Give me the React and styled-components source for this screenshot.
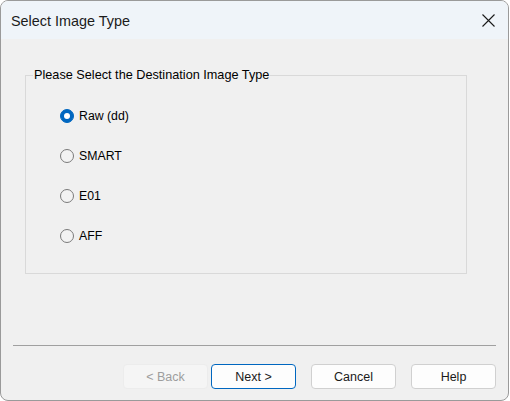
import React, { useState } from "react";
import styled, { createGlobalStyle } from "styled-components";

const Global = createGlobalStyle`
  html, body { margin: 0; padding: 0; background: #ffffff; }
  body { font-family: "Liberation Sans", Arial, sans-serif; }
  * { box-sizing: border-box; }
`;

const Window = styled.div`
  width: 509px;
  height: 401px;
  border: 1px solid #9a9a9a;
  border-radius: 8px;
  overflow: hidden;
  background: #f0f0f0;
  display: flex;
  flex-direction: column;
`;

const TitleBar = styled.div`
  height: 38px;
  flex: none;
  background: #eff4f9;
  display: flex;
  align-items: center;
  justify-content: space-between;
  padding: 0 13px 0 10px;
`;

const Title = styled.div`
  font-size: 14.4px;
  color: #1b1b1b;
  padding-top: 1px;
`;

const CloseButton = styled.button`
  border: 0;
  background: transparent;
  padding: 0;
  width: 14px;
  height: 14px;
  display: flex;
  align-items: center;
  justify-content: center;
`;

const Body = styled.div`
  flex: 1;
  display: flex;
  flex-direction: column;
  padding: 29px 0 0 0;
`;

const Group = styled.fieldset`
  margin: 0 0 0 24px;
  width: 442px;
  height: 206px;
  border: 1px solid #d9d9d9;
  padding: 0;
`;

const Legend = styled.legend`
  font-size: 12.7px;
  color: #000;
  padding: 0 1px;
  margin-left: 7px;
  line-height: 14px;
`;

const Options = styled.div`
  display: flex;
  flex-direction: column;
  gap: 26px;
  padding: 27px 0 0 34px;
`;

const Option = styled.label`
  display: flex;
  align-items: center;
  gap: 5px;
  height: 14px;
  font-size: 12.3px;
  color: #000;
  cursor: default;
`;

const Circle = styled.span`
  width: 14px;
  height: 14px;
  border-radius: 50%;
  flex: none;
  display: flex;
  align-items: center;
  justify-content: center;
  background: ${(p) => (p.$checked ? "#0067c0" : "#f3f3f3")};
  border: 1px solid ${(p) => (p.$checked ? "#0067c0" : "#7a7a7a")};
`;

const Dot = styled.span`
  width: 6px;
  height: 6px;
  border-radius: 50%;
  background: #ffffff;
`;

const Separator = styled.div`
  margin: 71px 12px 0 12px;
  border-top: 1px solid #a0a0a0;
  height: 0;
`;

const ButtonRow = styled.div`
  display: flex;
  justify-content: flex-end;
  padding: 18px 12px 0 0;
`;

const Button = styled.button`
  width: 85px;
  height: 25px;
  margin-left: ${(p) => p.$gap}px;
  border-radius: 4px;
  font-family: "Liberation Sans", Arial, sans-serif;
  font-size: 12.5px;
  padding: 0;
  color: ${(p) => (p.disabled ? "#9d9d9d" : "#1a1a1a")};
  background: ${(p) => (p.disabled ? "#f5f5f5" : "#fdfdfd")};
  border: 1px solid
    ${(p) => (p.$primary ? "#0067c0" : p.disabled ? "#ececec" : "#d0d0d0")};
`;

const options = ["Raw (dd)", "SMART", "E01", "AFF"];

export default function App() {
  const [sel, setSel] = useState(0);
  return (
    <>
      <Global />
      <Window>
        <TitleBar>
          <Title>Select Image Type</Title>
          <CloseButton aria-label="Close">
            <svg width="13" height="13" viewBox="0 0 13 13">
              <path d="M0.5 0.5 L12.5 12.5 M12.5 0.5 L0.5 12.5" stroke="#1a1a1a" strokeWidth="1.1" fill="none" />
            </svg>
          </CloseButton>
        </TitleBar>
        <Body>
          <Group>
            <Legend>Please Select the Destination Image Type</Legend>
            <Options>
              {options.map((o, i) => (
                <Option key={o} onClick={() => setSel(i)}>
                  <Circle $checked={sel === i}>{sel === i && <Dot />}</Circle>
                  {o}
                </Option>
              ))}
            </Options>
          </Group>
          <Separator />
          <ButtonRow>
            <Button disabled $gap={0}>&lt; Back</Button>
            <Button $primary $gap={3}>Next &gt;</Button>
            <Button $gap={15}>Cancel</Button>
            <Button $gap={15}>Help</Button>
          </ButtonRow>
        </Body>
      </Window>
    </>
  );
}
